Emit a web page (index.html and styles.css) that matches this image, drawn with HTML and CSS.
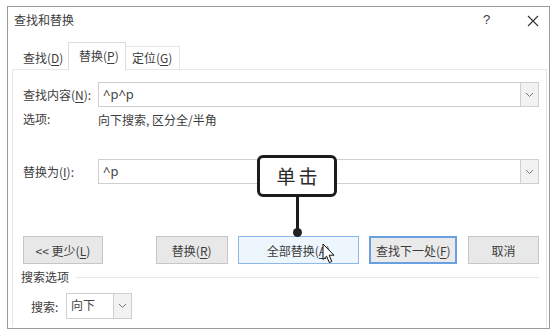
FILE: index.html
```html
<!DOCTYPE html>
<html lang="zh-CN">
  <head>
    <meta charset="UTF-8" />
    <title>查找和替换</title>
    <link rel="stylesheet" href="styles.css">
  </head>
  <body>
    <div class="dialog">
      <div class="titlebar">
        <span class="title">查找和替换</span>
        <span class="help">?</span>
        <span class="close">
          <svg width="12" height="12" viewBox="0 0 12 12"><path d="M1 1L11 11M11 1L1 11" stroke="#333" stroke-width="1.1" fill="none"/></svg>
        </span>
      </div>

      <div class="tabs">
        <div class="tab first">查找(<u>D</u>)</div>
        <div class="tab active">替换(<u>P</u>)</div>
        <div class="tab last">定位(<u>G</u>)</div>
      </div>

      <div class="panel">
        <div class="row">
          <label class="label">查找内容(<u>N</u>):</label>
          <div class="combo wide">
            <span class="value">^p^p</span>
            <span class="drop"><svg width="9" height="6" viewBox="0 0 9 6"><path d="M1 1L4.5 4.5L8 1" stroke="#777" fill="none"/></svg></span>
          </div>
        </div>
        <div class="row options">
          <span class="label">选项:</span>
          <span>向下搜索, 区分全/半角</span>
        </div>

        <div class="row replace">
          <label class="label">替换为(<u>I</u>):</label>
          <div class="combo wide">
            <span class="value">^p</span>
            <span class="drop"><svg width="9" height="6" viewBox="0 0 9 6"><path d="M1 1L4.5 4.5L8 1" stroke="#777" fill="none"/></svg></span>
          </div>
        </div>

        <div class="buttons">
          <button class="btn less">&lt;&lt; 更少(<u>L</u>)</button>
          <button class="btn replace-one">替换(<u>R</u>)</button>
          <button class="btn hover all">全部替换(<u>A</u>)</button>
          <button class="btn default next">查找下一处(<u>F</u>)</button>
          <button class="btn cancel">取消</button>
        </div>

        <div class="group">
          <span>搜索选项</span>
          <span class="rule"></span>
        </div>
        <div class="row search">
          <span class="small-label">搜索:</span>
          <div class="combo short">
            <span class="value cn">向下</span>
            <span class="drop"><svg width="9" height="6" viewBox="0 0 9 6"><path d="M1 1L4.5 4.5L8 1" stroke="#777" fill="none"/></svg></span>
          </div>
        </div>
      </div>

      <!-- annotation over the dialog -->
      <div class="callout">单击</div>
      <div class="pointer"></div>
      <div class="dot"></div>
      <svg class="cursor" width="14" height="21" viewBox="0 0 14 21">
        <path d="M1 1L1 16.5L4.6 13.2L7.3 19.6L9.8 18.5L7.2 12.2L12 12.2Z" fill="#fff" stroke="#111" stroke-width="1" stroke-linejoin="round"/>
      </svg>
    </div>
  </body>
</html>
```

FILE: styles.css
```css
body {
  margin: 0;
  background: #fff;
  font-family: "Noto Sans CJK SC", "Noto Sans", sans-serif;
  font-size: 12px;
  color: #3c3c3c;
}
u {
  text-decoration-thickness: 1px;
  text-underline-offset: 2px;
}
.dialog {
  position: relative;
  box-sizing: border-box;
  width: 543px;
  height: 323px;
  margin: 6px 0 0 7px;
  border: 1px solid #9c9c9c;
  background: #fff;
}
.titlebar {
  display: flex;
  align-items: center;
  height: 26px;
  padding: 0 0 0 6px;
}
.title {
  flex: 1;
  font-size: 12px;
  line-height: 16px;
}
.help {
  width: 44px;
  font-family: "Liberation Sans", sans-serif;
  font-size: 13px;
  line-height: 16px;
}
.close {
  display: flex;
  width: 22px;
  padding-top: 2px;
}
.tabs {
  display: flex;
  align-items: flex-end;
  height: 27px;
  margin-top: 9px;
  padding-left: 4px;
}
.tab {
  box-sizing: border-box;
  height: 23px;
  line-height: 22px;
  border: 1px solid #e6e6e6;
  border-bottom: none;
  background: #fff;
  white-space: nowrap;
}
.tab.first {
  width: 56px;
  padding-left: 10px;
  border-color: transparent;
}
.tab.active {
  position: relative;
  width: 58px;
  height: 28px;
  margin-bottom: -1px;
  padding-left: 10px;
  line-height: 26px;
  border-color: #dcdcdc;
  z-index: 1;
}
.tab.last {
  width: 54px;
  padding-left: 6px;
  border-left: none;
}
.panel {
  box-sizing: border-box;
  height: 258px;
  margin: 0 2px 0 4px;
  padding: 12px 7px 0 10px;
  border: 1px solid #e6e6e6;
  border-bottom: none;
}
.row {
  display: flex;
  align-items: center;
}
.label {
  width: 75px;
  line-height: 16px;
}
.combo {
  display: flex;
  box-sizing: border-box;
  height: 25px;
  border: 1px solid #cfcfcf;
  background: #fff;
}
.combo.wide {
  flex: 1;
}
.value {
  flex: 1;
  padding-left: 4px;
  font-family: "Noto Sans", sans-serif;
  font-size: 13px;
  line-height: 22px;
  color: #444;
}
.value.cn {
  font-family: "Noto Sans CJK SC", sans-serif;
  font-size: 12px;
}
.drop {
  display: flex;
  align-items: center;
  justify-content: center;
  width: 17px;
  border-left: 1px solid #cfcfcf;
  background: #f2f2f2;
}
.options {
  margin-top: 4px;
  height: 16px;
}
.replace {
  margin-top: 32px;
}
.buttons {
  display: flex;
  margin-top: 52px;
}
.btn {
  box-sizing: border-box;
  height: 28px;
  margin: 0;
  padding: 0;
  border: 1px solid #c6c6c6;
  background: #e8e8e8;
  font-family: inherit;
  font-size: 12px;
  color: #3c3c3c;
}
.less { width: 80px; }
.replace-one { width: 72px; margin-left: 53px; }
.all { width: 122px; margin-left: 10px; }
.next { width: 88px; margin-left: 10px; }
.cancel { width: 71px; margin-left: 11px; }
.btn.hover {
  border-color: #8fb8e8;
  background: #eef6fd;
}
.btn.default {
  border: 2px solid #6a9fe0;
  background: #eaeaea;
}
.group {
  display: flex;
  align-items: center;
  margin: 3px 0 0 -2px;
  line-height: 20px;
}
.rule {
  flex: 1;
  height: 1px;
  margin-left: 7px;
  background: #e6e6e6;
}
.search {
  margin-top: 6px;
}
.small-label {
  box-sizing: border-box;
  width: 43px;
  padding-left: 8px;
}
.combo.short {
  width: 66px;
  height: 26px;
}
.callout {
  position: absolute;
  left: 249px;
  top: 148px;
  box-sizing: border-box;
  width: 80px;
  height: 42px;
  border: 3px solid #1c1c1c;
  border-radius: 6px;
  background: #fff;
  font-size: 19px;
  line-height: 36px;
  letter-spacing: 3px;
  text-indent: 3px;
  text-align: center;
  color: #2a2a2a;
  z-index: 2;
}
.pointer {
  position: absolute;
  left: 288px;
  top: 189px;
  width: 3px;
  height: 36px;
  background: #1c1c1c;
}
.dot {
  position: absolute;
  left: 285px;
  top: 221px;
  width: 9px;
  height: 9px;
  border-radius: 50%;
  background: #222;
}
.cursor {
  position: absolute;
  left: 314px;
  top: 236px;
}
```
